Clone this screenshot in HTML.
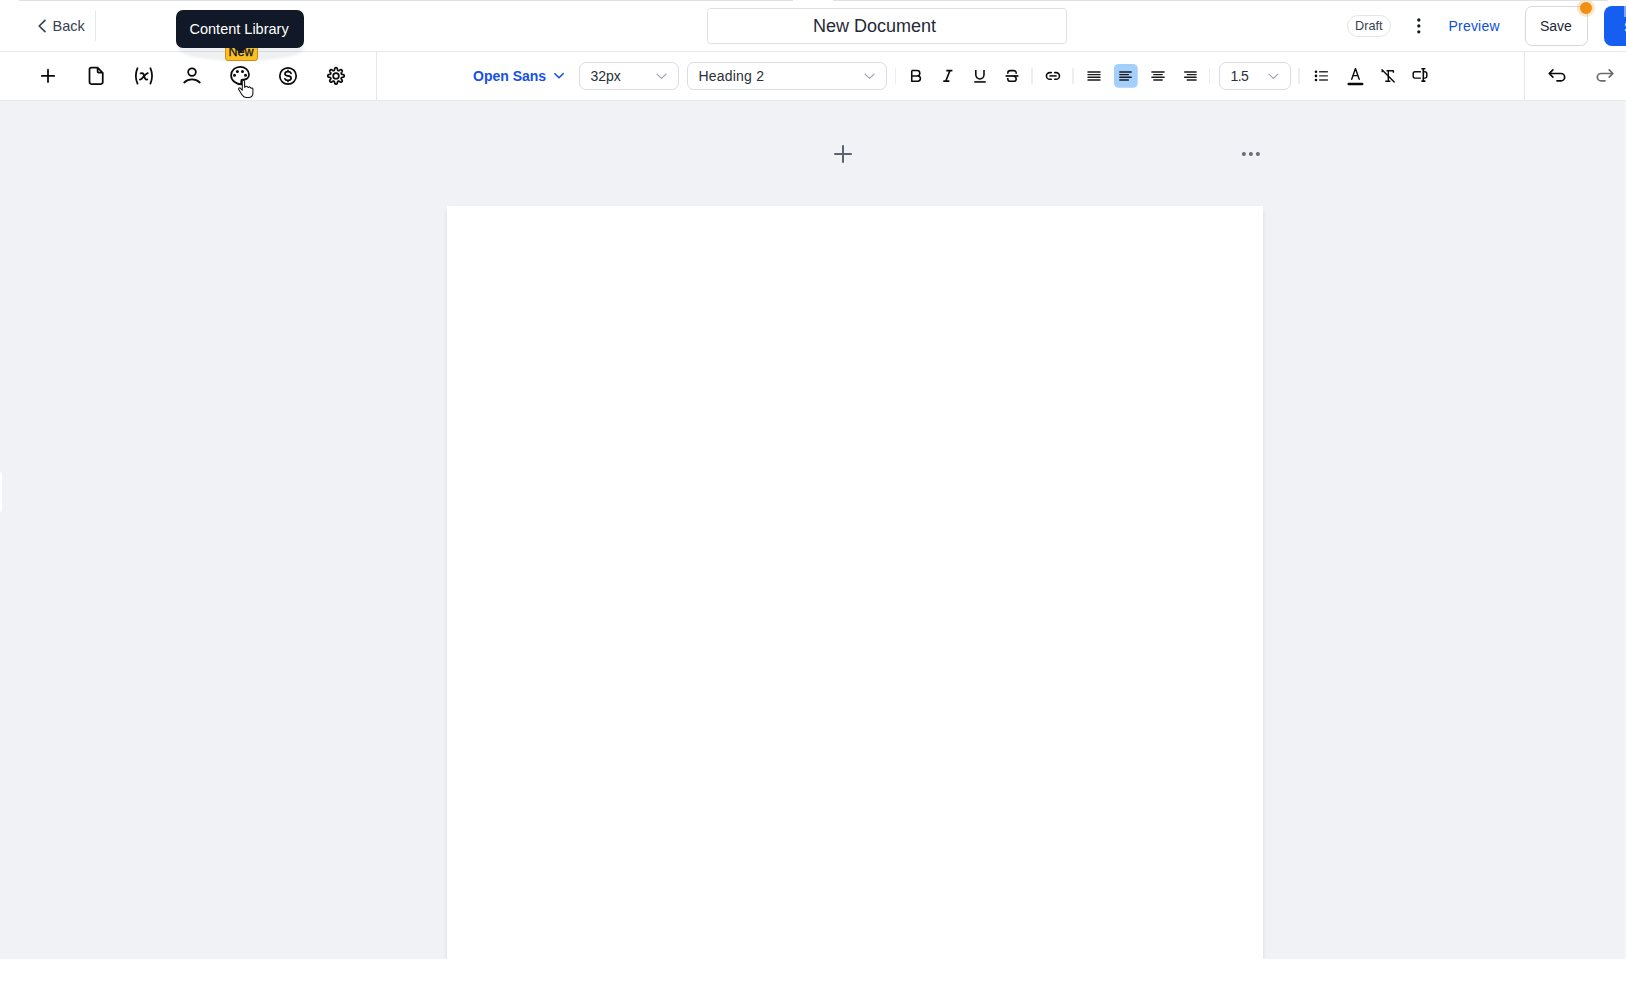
<!DOCTYPE html>
<html><head><meta charset="utf-8">
<style>
*{box-sizing:border-box;margin:0;padding:0}
html,body{width:1626px;height:984px;overflow:hidden;background:#fff;font-family:"Liberation Sans",sans-serif;position:relative}
.a{position:absolute}
.topline{position:absolute;top:0;height:1px;background:#dfe1e5;z-index:10}
#header{position:absolute;left:0;top:0;width:1626px;height:52px;border-bottom:1px solid #e7e8ec}
#toolbar{position:absolute;left:0;top:52px;width:1626px;height:49px;border-bottom:1px solid #e7e8ec;background:#fff}
#canvas{position:absolute;left:0;top:101px;width:1626px;height:858px;background:#f1f2f6;overflow:hidden}
#paper{position:absolute;left:447px;top:105px;width:816px;height:900px;background:#fff;box-shadow:0 4px 6px -1px rgba(0,0,0,0.10),0 2px 4px -1px rgba(0,0,0,0.06)}
.vdiv{position:absolute;width:1px;background:#e5e7eb}
.sel{position:absolute;top:62px;height:28px;border:1px solid #d9dce1;border-radius:7px;background:#fff}
.ico{position:absolute;overflow:visible}
.t{line-height:1;white-space:nowrap}
</style></head><body>
<div class="topline" style="left:19px;width:774px"></div>
<div class="topline" style="left:833px;width:775px"></div>
<div id="header">
  <svg class="ico" style="left:0;top:0" width="60" height="52"><polyline points="45,20.3 39.2,26 45,31.7" fill="none" stroke="#374151" stroke-width="1.7" stroke-linecap="round" stroke-linejoin="round"/></svg>
  <div class="a t" style="left:52.5px;top:18.9px;font-size:14.5px;color:#374151">Back</div>
  <div class="vdiv" style="left:95px;top:11px;height:30px"></div>
  <div class="a" style="left:707px;top:8px;width:360px;height:36px;border:1px solid #dfe1e6;border-radius:3.5px"></div>
  <div class="a t" style="left:813px;top:17.1px;font-size:18px;color:#1f2937">New Document</div>
  <div class="a" style="left:1347px;top:15px;width:44px;height:22px;border:1px solid #e3e5e9;border-radius:11px"></div>
  <div class="a t" style="left:1355px;top:19.6px;font-size:12.7px;color:#374151">Draft</div>
  <svg class="ico" style="left:1410px;top:14px" width="18" height="24"><circle cx="8.8" cy="6" r="1.65" fill="#111827"/><circle cx="8.8" cy="11.9" r="1.65" fill="#111827"/><circle cx="8.8" cy="17.8" r="1.65" fill="#111827"/></svg>
  <div class="a t" style="left:1448.5px;top:19.1px;font-size:14px;letter-spacing:0.2px;color:#0d50dc">Preview</div>
  <div class="a" style="left:1525px;top:6px;width:63px;height:40px;border:1px solid #d5d9df;border-radius:7px;background:#fff"></div>
  <div class="a t" style="left:1540px;top:19.25px;font-size:14px;color:#1f2937">Save</div>
  <div class="a" style="left:1576.9px;top:-1.4px;width:18.5px;height:18.5px;border-radius:50%;background:rgba(242,150,30,0.24)"></div>
  <div class="a" style="left:1580px;top:1.8px;width:12.2px;height:12.2px;border-radius:50%;background:#f18f13"></div>
  <div class="a" style="left:1604px;top:6px;width:40px;height:40px;border-radius:8px;background:#155ef0;overflow:hidden"><div class="a" style="left:20px;top:0;width:3px;height:11px;background:#7fa8f7"></div><div class="a t" style="left:20px;top:13.5px;font-size:14px;color:#fff">S</div></div>
</div>
<div id="toolbar">
  <div class="vdiv" style="left:376px;top:0;height:48px"></div>
  <div class="vdiv" style="left:1524px;top:0;height:48px"></div>
  <div class="a t" style="left:473px;top:16.85px;font-size:14px;font-weight:700;color:#1650e6">Open Sans</div>
  <div class="sel" style="left:579px;top:10px;width:100px;height:28px"></div>
  <div class="a t" style="left:590.5px;top:17.25px;font-size:14px;color:#2a2f38">32px</div>
  <div class="sel" style="left:687px;top:10px;width:200px;height:28px"></div>
  <div class="a t" style="left:698.5px;top:17.2px;font-size:14px;letter-spacing:0.2px;color:#2a2f38">Heading 2</div>
  <div class="sel" style="left:1218.5px;top:10px;width:72px;height:28px"></div>
  <div class="a t" style="left:1230.5px;top:17.2px;font-size:14px;letter-spacing:-0.6px;color:#2a2f38">1.5</div>
  <div class="vdiv" style="left:894.5px;top:16.2px;height:15.5px;width:1.8px;background:#eceef2"></div>
  <div class="vdiv" style="left:1031px;top:16.2px;height:15.5px;width:1.8px;background:#eceef2"></div>
  <div class="vdiv" style="left:1072px;top:16.2px;height:15.5px;width:1.8px;background:#eceef2"></div>
  <div class="vdiv" style="left:1208.6px;top:16.2px;height:15.5px;width:1.8px;background:#eceef2"></div>
  <div class="vdiv" style="left:1297.8px;top:16.2px;height:15.5px;width:1.8px;background:#eceef2"></div>
</div>
<div id="canvas">
  <svg class="ico" style="left:0;top:0" width="1626" height="120" fill="none">
    <path d="M835,53 H851 M843,45 V61" stroke="#5b6270" stroke-width="2" stroke-linecap="round"/>
    <g fill="#656b77"><circle cx="1243.9" cy="52.9" r="2"/><circle cx="1250.9" cy="52.9" r="2"/><circle cx="1257.9" cy="52.9" r="2"/></g>
  </svg>
  <div class="a" style="left:0;top:371px;width:2px;height:40px;background:#fff;border-radius:0 2px 2px 0"></div>
  <div class="a" style="left:1624px;top:0;width:2px;height:858px;background:#f4f5f8"></div>
  <div id="paper"></div>
</div>
<svg class="ico" style="left:0;top:0" width="1626" height="101" fill="none" stroke-linecap="round" stroke-linejoin="round">
<g stroke="#0a0a0a" stroke-width="1.75">
 <path d="M41.8,75.9 H54.2 M48,69.7 V82.1"/>
 <path d="M91.4,67.65 H97.6 L102.75,72.8 V82.1 A1.9,1.9 0 0 1 100.85,84 H91.4 A1.9,1.9 0 0 1 89.5,82.1 V69.55 A1.9,1.9 0 0 1 91.4,67.65 Z M97.6,67.65 V70.9 A1.7,1.7 0 0 0 99.3,72.6 H102.6"/>
 <path d="M137.5,68.2 Q134.2,75.9 137.5,83.6 M150.4,68.2 Q153.7,75.9 150.4,83.6"/>
 <path d="M140.6,73.4 C141.8,72.9 142.9,73 143.4,74 L145,78.4 C145.4,79.4 146.3,79.7 147.3,79.4 M147.8,73.2 C146.6,73.6 145.6,74.4 144.4,75.7 L142.1,78.3 C141.4,79.1 140.7,79.5 139.9,79.6"/>
 <circle cx="192" cy="72.1" r="3.85"/>
 <path d="M184.2,82.5 A11.5,11.5 0 0 1 199.8,82.5"/>
 <path d="M241.4,84.4 C236.2,84.2 231.1,80.6 231.1,75.5 C231.1,70.2 235.3,66.8 240.1,66.8 C245.2,66.8 249,70.2 249,74.6 C249,77.6 246.4,79.6 243.6,79.6 H242.6 C241.7,79.6 241.2,80.3 241.2,81.2 Z"/>
 <circle cx="288" cy="76" r="8.2" stroke-width="1.7"/>
 <path d="M291.1,73.4 C290.7,72.3 289.6,71.7 288,71.7 C286.2,71.7 285,72.5 285,73.8 C285,75.2 286.2,75.8 288,75.9 C289.8,76 291.1,76.8 291.1,78.2 C291.1,79.6 289.8,80.4 288,80.4 C286.4,80.4 285.2,79.8 284.8,78.7 M288,70.4 V71.7 M288,80.4 V81.6" stroke-width="1.7"/>
 <path d="M336.00,67.70 L336.16,67.71 L336.32,67.72 L336.48,67.75 L336.64,67.80 L336.79,67.87 L336.94,67.98 L337.07,68.13 L337.19,68.36 L337.29,68.65 L337.37,68.99 L337.44,69.35 L337.49,69.68 L337.56,69.94 L337.63,70.14 L337.70,70.28 L337.79,70.39 L337.88,70.47 L337.98,70.53 L338.08,70.59 L338.18,70.63 L338.29,70.67 L338.39,70.71 L338.51,70.73 L338.63,70.74 L338.77,70.72 L338.93,70.68 L339.12,70.58 L339.34,70.44 L339.61,70.25 L339.91,70.04 L340.21,69.86 L340.49,69.72 L340.73,69.65 L340.94,69.63 L341.12,69.66 L341.28,69.72 L341.42,69.80 L341.56,69.89 L341.68,69.99 L341.80,70.10 L341.91,70.22 L342.01,70.34 L342.10,70.48 L342.18,70.62 L342.24,70.78 L342.27,70.96 L342.25,71.17 L342.18,71.41 L342.04,71.69 L341.86,71.99 L341.65,72.29 L341.46,72.56 L341.32,72.78 L341.22,72.97 L341.18,73.13 L341.16,73.27 L341.17,73.39 L341.19,73.51 L341.23,73.61 L341.27,73.72 L341.31,73.82 L341.37,73.92 L341.43,74.02 L341.51,74.11 L341.62,74.20 L341.76,74.27 L341.96,74.34 L342.22,74.41 L342.55,74.46 L342.91,74.53 L343.25,74.61 L343.54,74.71 L343.77,74.83 L343.92,74.96 L344.03,75.11 L344.10,75.26 L344.15,75.42 L344.18,75.58 L344.19,75.74 L344.20,75.90 L344.19,76.06 L344.18,76.22 L344.15,76.38 L344.10,76.54 L344.03,76.69 L343.92,76.84 L343.77,76.97 L343.54,77.09 L343.25,77.19 L342.91,77.27 L342.55,77.34 L342.22,77.39 L341.96,77.46 L341.76,77.53 L341.62,77.60 L341.51,77.69 L341.43,77.78 L341.37,77.88 L341.31,77.98 L341.27,78.08 L341.23,78.19 L341.19,78.29 L341.17,78.41 L341.16,78.53 L341.18,78.67 L341.22,78.83 L341.32,79.02 L341.46,79.24 L341.65,79.51 L341.86,79.81 L342.04,80.11 L342.18,80.39 L342.25,80.63 L342.27,80.84 L342.24,81.02 L342.18,81.18 L342.10,81.32 L342.01,81.46 L341.91,81.58 L341.80,81.70 L341.68,81.81 L341.56,81.91 L341.42,82.00 L341.28,82.08 L341.12,82.14 L340.94,82.17 L340.73,82.15 L340.49,82.08 L340.21,81.94 L339.91,81.76 L339.61,81.55 L339.34,81.36 L339.12,81.22 L338.93,81.12 L338.77,81.08 L338.63,81.06 L338.51,81.07 L338.39,81.09 L338.29,81.13 L338.18,81.17 L338.08,81.21 L337.98,81.27 L337.88,81.33 L337.79,81.41 L337.70,81.52 L337.63,81.66 L337.56,81.86 L337.49,82.12 L337.44,82.45 L337.37,82.81 L337.29,83.15 L337.19,83.44 L337.07,83.67 L336.94,83.82 L336.79,83.93 L336.64,84.00 L336.48,84.05 L336.32,84.08 L336.16,84.09 L336.00,84.10 L335.84,84.09 L335.68,84.08 L335.52,84.05 L335.36,84.00 L335.21,83.93 L335.06,83.82 L334.93,83.67 L334.81,83.44 L334.71,83.15 L334.63,82.81 L334.56,82.45 L334.51,82.12 L334.44,81.86 L334.37,81.66 L334.30,81.52 L334.21,81.41 L334.12,81.33 L334.02,81.27 L333.92,81.21 L333.82,81.17 L333.71,81.13 L333.61,81.09 L333.49,81.07 L333.37,81.06 L333.23,81.08 L333.07,81.12 L332.88,81.22 L332.66,81.36 L332.39,81.55 L332.09,81.76 L331.79,81.94 L331.51,82.08 L331.27,82.15 L331.06,82.17 L330.88,82.14 L330.72,82.08 L330.58,82.00 L330.44,81.91 L330.32,81.81 L330.20,81.70 L330.09,81.58 L329.99,81.46 L329.90,81.32 L329.82,81.18 L329.76,81.02 L329.73,80.84 L329.75,80.63 L329.82,80.39 L329.96,80.11 L330.14,79.81 L330.35,79.51 L330.54,79.24 L330.68,79.02 L330.78,78.83 L330.82,78.67 L330.84,78.53 L330.83,78.41 L330.81,78.29 L330.77,78.19 L330.73,78.08 L330.69,77.98 L330.63,77.88 L330.57,77.78 L330.49,77.69 L330.38,77.60 L330.24,77.53 L330.04,77.46 L329.78,77.39 L329.45,77.34 L329.09,77.27 L328.75,77.19 L328.46,77.09 L328.23,76.97 L328.08,76.84 L327.97,76.69 L327.90,76.54 L327.85,76.38 L327.82,76.22 L327.81,76.06 L327.80,75.90 L327.81,75.74 L327.82,75.58 L327.85,75.42 L327.90,75.26 L327.97,75.11 L328.08,74.96 L328.23,74.83 L328.46,74.71 L328.75,74.61 L329.09,74.53 L329.45,74.46 L329.78,74.41 L330.04,74.34 L330.24,74.27 L330.38,74.20 L330.49,74.11 L330.57,74.02 L330.63,73.92 L330.69,73.82 L330.73,73.72 L330.77,73.61 L330.81,73.51 L330.83,73.39 L330.84,73.27 L330.82,73.13 L330.78,72.97 L330.68,72.78 L330.54,72.56 L330.35,72.29 L330.14,71.99 L329.96,71.69 L329.82,71.41 L329.75,71.17 L329.73,70.96 L329.76,70.78 L329.82,70.62 L329.90,70.48 L329.99,70.34 L330.09,70.22 L330.20,70.10 L330.32,69.99 L330.44,69.89 L330.58,69.80 L330.72,69.72 L330.88,69.66 L331.06,69.63 L331.27,69.65 L331.51,69.72 L331.79,69.86 L332.09,70.04 L332.39,70.25 L332.66,70.44 L332.88,70.58 L333.07,70.68 L333.23,70.72 L333.37,70.74 L333.49,70.73 L333.61,70.71 L333.71,70.67 L333.82,70.63 L333.92,70.59 L334.02,70.53 L334.12,70.47 L334.21,70.39 L334.30,70.28 L334.37,70.14 L334.44,69.94 L334.51,69.68 L334.56,69.35 L334.63,68.99 L334.71,68.65 L334.81,68.36 L334.93,68.13 L335.06,67.98 L335.21,67.87 L335.36,67.80 L335.52,67.75 L335.68,67.72 L335.84,67.71 Z" stroke-width="1.7"/>
 <circle cx="336" cy="75.9" r="2.85" stroke-width="1.7"/>
</g>
<g fill="#0a0a0a">
 <circle cx="237.4" cy="71.5" r="1.5"/><circle cx="242.5" cy="71.5" r="1.5"/>
 <circle cx="234.5" cy="75.3" r="1.5"/><circle cx="245.5" cy="75.3" r="1.5"/>
</g>
<!-- hand cursor -->
<path d="M242.3,81.3 C242.3,80.2 244.6,80.2 244.6,81.3 V87.2 L245.4,87 C245.6,85.9 247.6,86 247.7,87.2 L248.5,87.4 C248.9,86.6 250.6,86.7 250.7,87.9 L251.3,88.3 C251.7,87.8 252.9,88 252.9,89.1 V93.2 C252.9,95.6 251.2,97.4 248.6,97.4 H246.2 C244.3,97.4 243.1,96.6 242.1,95 L238.7,89.4 C238.1,88.4 239.4,87.4 240.3,88.2 L242.3,90.3 Z" fill="#fff" stroke="#111" stroke-width="1.05" stroke-linejoin="round"/>

<!-- chevrons -->
<path d="M554.9,73.7 L559,77.8 L563.2,73.7" stroke="#1650e6" stroke-width="1.6"/>
<path d="M657,74.1 L661.5,78.4 L666.1,74.1" stroke="#9aa0aa" stroke-width="1.1"/>
<path d="M865.1,74.1 L869.6,78.4 L874.1,74.1" stroke="#9aa0aa" stroke-width="1.1"/>
<path d="M1268.9,74.1 L1273.4,78.4 L1277.9,74.1" stroke="#9aa0aa" stroke-width="1.1"/>
<!-- B I U S link -->
<g stroke="#0a0a0a" stroke-width="1.55" stroke-linecap="butt">
 <path d="M911.75,70.55 V81.15 H917.8 A2.6,2.6 0 0 0 917.8,75.95 H911.75 M911.75,75.95 H917.1 A2.7,2.7 0 0 0 917.1,70.55 H911.75"/>
 <path d="M946.3,70.6 H952.4 M943.3,81.1 H949.4 M949.9,70.6 L945.8,81.1"/>
 <path d="M975.8,69.9 V74.8 A4.1,4.1 0 0 0 984,74.8 V69.9"/>
 <path d="M974.3,81.9 H985.7" stroke="#2b2d33" stroke-width="1.9"/>
 <path d="M1007.8,73.7 V72.9 A2.4,2.3 0 0 1 1010.2,70.6 H1013.8 A2.4,2.3 0 0 1 1016.2,72.9 V73.7 M1007.8,78.1 V79 A2.4,2.3 0 0 0 1010.2,81.3 H1013.8 A2.4,2.3 0 0 0 1016.2,79 C1016.2,77.4 1015.3,76.5 1013.6,76"/>
 <path d="M1005.6,76 H1018.4" stroke-width="1.7"/>
 <path d="M1051.3,72.6 H1049.8 A3.35,3.35 0 0 0 1049.8,79.3 H1051.3 M1054.7,72.6 H1056.1 A3.35,3.35 0 0 1 1056.1,79.3 H1054.7" stroke-linecap="round"/>
 <path d="M1050.1,75.95 H1056" stroke="#2b2d33" stroke-width="1.7" stroke-linecap="round"/>
</g>
<!-- align -->
<rect x="1114" y="64" width="23.7" height="23.7" rx="4.5" fill="#a5cffb"/>
<g stroke="#1a1a1c" stroke-width="1.45" stroke-linecap="round">
 <path d="M1088,71.9 H1100 M1088,74.6 H1100 M1088,77.3 H1100 M1088,80 H1100"/>
 <path d="M1119.8,71.9 H1131.2 M1119.8,74.6 H1128.4 M1119.8,77.3 H1131.2 M1119.8,80 H1128.4"/>
 <path d="M1151.9,71.9 H1164.1 M1153.8,74.6 H1162.2 M1151.9,77.3 H1164.1 M1153.8,80 H1162.2"/>
 <path d="M1184.7,71.9 H1196.1 M1187.3,74.6 H1196.1 M1184.7,77.3 H1196.1 M1187.3,80 H1196.1"/>
</g>
<!-- list, A, clear, textbox -->
<g fill="#0a0a0a"><circle cx="1316" cy="71.7" r="1.3"/><circle cx="1316" cy="75.9" r="1.3"/><circle cx="1316" cy="80" r="1.3"/></g>
<g stroke="#333" stroke-width="1.4" stroke-linecap="butt"><path d="M1319.1,71.7 H1327.9 M1319.1,75.9 H1327.9 M1319.1,80 H1327.9"/></g>
<path d="M1351.7,79.3 L1355.45,68.6 L1359.2,79.3 M1353.1,75.6 H1357.8" stroke="#0a0a0a" stroke-width="1.4"/>
<path d="M1348.8,84 H1362.1" stroke="#0a0a0a" stroke-width="2.7"/>
<g stroke="#0a0a0a" stroke-width="1.4">
 <path d="M1382,69.8 L1394.2,82"/>
 <path d="M1386.5,70.7 H1393.4 V72.7 M1388.3,70.7 V81.3 M1385.3,81.3 H1390.4" stroke-linecap="butt"/>
 <path d="M1382.2,70.6 V72.3" stroke-linecap="butt"/>
</g>
<g stroke="#0a0a0a" stroke-width="1.45" stroke-linecap="butt">
 <path d="M1420.9,71.8 H1415 A1.8,1.8 0 0 0 1413.2,73.6 V76.3 A1.8,1.8 0 0 0 1415,78.1 H1420.9"/>
 <path d="M1424.1,71.8 H1425 A1.8,1.8 0 0 1 1426.8,73.6 V76.3 A1.8,1.8 0 0 1 1425,78.1 H1424.1"/>
 <path d="M1423.3,68.6 V81.2 M1421.4,68.7 H1425.4 M1421.4,81.1 H1425.4" stroke-width="1.6"/>
</g>
<!-- undo redo -->
<path d="M1552.9,69.8 L1549.2,73.5 L1552.9,77.2 M1549.5,73.5 H1561 A3.65,3.65 0 0 1 1561,80.8 H1557" stroke="#0a0a0a" stroke-width="1.7"/>
<path d="M1609.2,69.8 L1612.9,73.5 L1609.2,77.2 M1612.6,73.5 H1601 A3.65,3.65 0 0 0 1601,80.8 H1605" stroke="#6b6b6b" stroke-width="1.7"/>
</svg>
<div id="tipwrap">
  <div class="a" style="left:178px;top:35px;width:126px;height:25.5px;border-radius:50%;background:rgba(30,41,70,0.07);filter:blur(1.2px)"></div>
  <div class="a" style="left:225px;top:45px;width:33px;height:16px;background:#fbbf24;border:1px solid #cf8c17;border-radius:3px"></div>
  <div class="a t" style="left:228.5px;top:46.2px;font-size:12.5px;color:#0f172a;font-weight:400;-webkit-text-stroke:0.3px #0f172a">New</div>
  <div class="a" style="left:176px;top:10px;width:128px;height:38px;background:#111827;border-radius:7px"></div>
  <svg class="ico" style="left:0;top:0" width="320" height="60"><path d="M233,47 L240.5,53 L248,47 Z" fill="#111827"/></svg>
  <div class="a t" style="left:189.5px;top:21.5px;font-size:14.5px;color:#fff">Content Library</div>
</div>
</body></html>
